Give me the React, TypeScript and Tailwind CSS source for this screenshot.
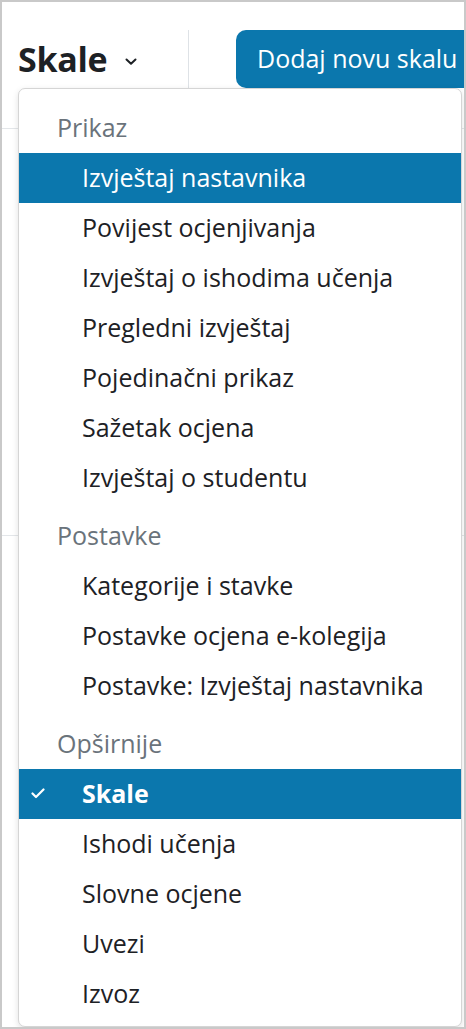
import React from 'react';

type Item = { label: string; active?: boolean; checked?: boolean };
type Group = { title: string; items: Item[] };

const GROUPS: Group[] = [
  {
    title: 'Prikaz',
    items: [
      { label: 'Izvještaj nastavnika', active: true },
      { label: 'Povijest ocjenjivanja' },
      { label: 'Izvještaj o ishodima učenja' },
      { label: 'Pregledni izvještaj' },
      { label: 'Pojedinačni prikaz' },
      { label: 'Sažetak ocjena' },
      { label: 'Izvještaj o studentu' },
    ],
  },
  {
    title: 'Postavke',
    items: [
      { label: 'Kategorije i stavke' },
      { label: 'Postavke ocjena e-kolegija' },
      { label: 'Postavke: Izvještaj nastavnika' },
    ],
  },
  {
    title: 'Opširnije',
    items: [
      { label: 'Skale', active: true, checked: true },
      { label: 'Ishodi učenja' },
      { label: 'Slovne ocjene' },
      { label: 'Uvezi' },
      { label: 'Izvoz' },
    ],
  },
];

export default function App() {
  return (
    <div
      className="relative h-[1029px] w-[466px] overflow-hidden border-2 border-[#c9c9c9] bg-white text-[#1d2125]"
      style={{ fontFamily: '"Open Sans", "Noto Sans", sans-serif' }}
    >
      {/* Page header behind the menu */}
      <div className="flex h-[86px] items-end">
        <div className="flex h-[58px] w-[186px] flex-none items-center pl-[16px]">
          <h2 className="text-[34px] font-bold leading-none tracking-[-0.3px]">Skale</h2>
          <svg className="ml-[18px] mt-[6px]" width="12" height="8" viewBox="0 0 12 8" fill="none">
            <path d="M1.5 1.5 L6 5.8 L10.5 1.5" stroke="#1d2125" strokeWidth="2" strokeLinecap="round" strokeLinejoin="round" />
          </svg>
        </div>
        <div className="h-[58px] w-px flex-none bg-[#dee2e6]" />
        <div className="ml-[47px] flex h-[58px] flex-none items-center whitespace-nowrap rounded-t-[10px] rounded-bl-[10px] bg-[#0b77ad] pl-[21px] pr-[20px] text-[25px] text-white">
          Dodaj novu skalu
        </div>
      </div>
      <div className="mt-[40px] h-px w-full bg-[#e3e6e9]" />
      <div className="mt-[406px] h-px w-full bg-[#e3e6e9]" />

      {/* Dropdown menu */}
      <div className="absolute left-[16px] top-[86px] h-[939px] w-[444px] rounded-[7px] border border-[#d5d5d5] bg-white pb-[8px] pt-[14px] shadow-[0_2px_6px_rgba(0,0,0,0.12)]">
        {GROUPS.map((g, gi) => (
          <div key={g.title} className={gi > 0 ? 'mt-[8px]' : ''}>
            <div className="flex h-[50px] items-center whitespace-nowrap pl-[38px] text-[25px] text-[#6a737b]">{g.title}</div>
            {g.items.map((it) => (
              <div
                key={it.label}
                className={`relative flex h-[50px] items-center whitespace-nowrap pl-[63px] text-[25px] ${
                  it.active ? 'bg-[#0b77ad] text-white' : 'text-[#1d2125]'
                } ${it.checked ? 'font-bold' : ''}`}
              >
                {it.checked && (
                  <svg className="absolute left-[12px] top-[19px]" width="14" height="11" viewBox="0 0 14 11" fill="none">
                    <path d="M1.5 5.5 L5 9 L12.5 1.5" stroke="white" strokeWidth="2.2" strokeLinecap="round" strokeLinejoin="round" />
                  </svg>
                )}
                {it.label}
              </div>
            ))}
          </div>
        ))}
      </div>
    </div>
  );
}
